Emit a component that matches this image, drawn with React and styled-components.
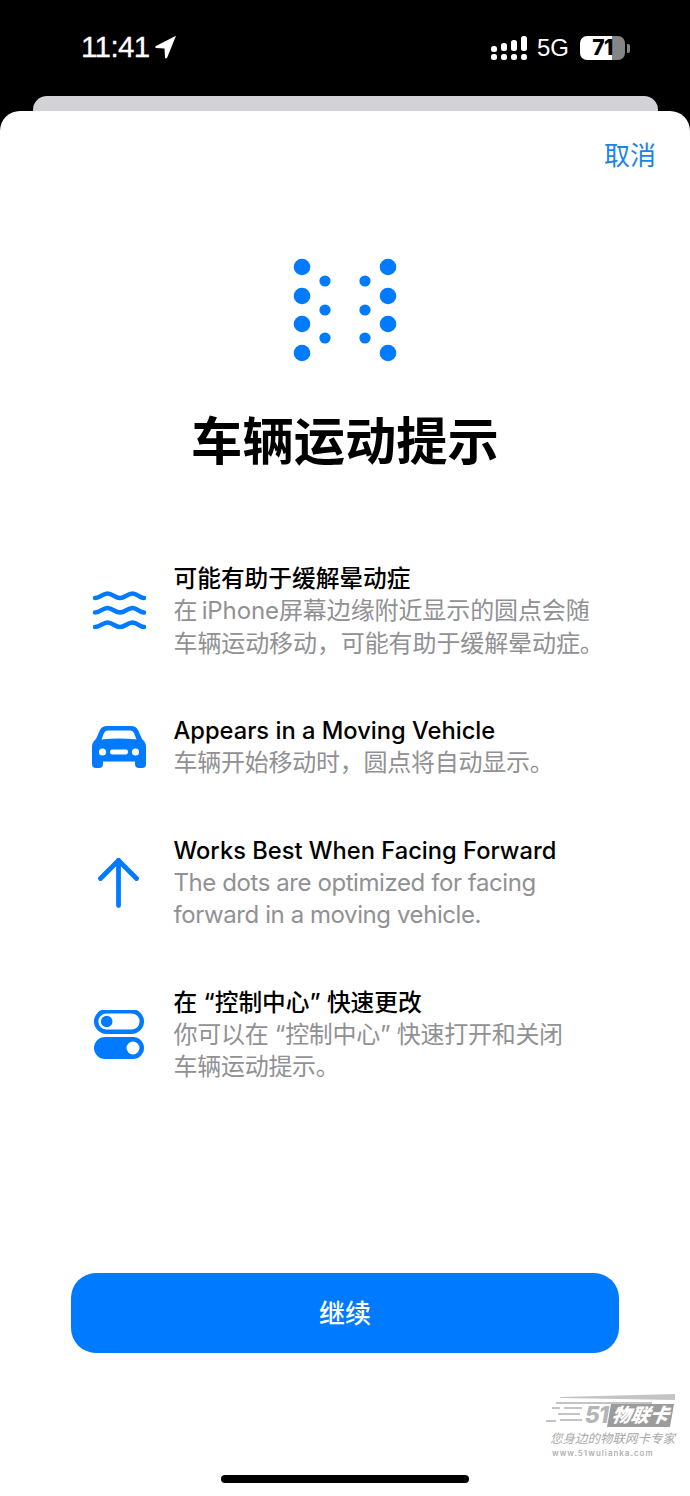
import styled, { createGlobalStyle } from "styled-components";

const GlobalStyle = createGlobalStyle`
  html, body {
    margin: 0;
    padding: 0;
    background: #000;
  }
  body {
    font-family: Inter, "Noto Sans CJK SC", sans-serif;
  }
`;

const Page = styled.div`
  position: relative;
  width: 690px;
  height: 1496px;
  overflow: hidden;
  background: #000;
  display: flex;
  flex-direction: column;
`;

const StatusBar = styled.div`
  height: 96px;
  flex: none;
  box-sizing: border-box;
  padding: 30px 60px 0 81px;
  display: flex;
  align-items: flex-start;
  justify-content: space-between;
  color: #fff;
`;

const Clock = styled.div`
  display: flex;
  align-items: center;
  gap: 5px;
  height: 34px;
  font-family: "Liberation Sans", sans-serif;
  font-size: 29.5px;
  font-weight: 400;
  letter-spacing: -0.6px;
  -webkit-text-stroke: 0.3px #fff;
`;

const StatusRight = styled.div`
  display: flex;
  align-items: center;
  gap: 11px;
  height: 36px;
`;

const Network = styled.span`
  font-family: "Liberation Sans", sans-serif;
  font-size: 24px;
  font-weight: 400;
  margin-left: -1px;
`;

const Battery = styled.div`
  position: relative;
  width: 45px;
  height: 24px;
  border-radius: 7px;
  overflow: hidden;
  background: linear-gradient(to right, #fff 71%, #858585 71%);
  color: #000;
  font-size: 21px;
  font-weight: 800;
  line-height: 24px;
  text-align: center;
  letter-spacing: -0.5px;
`;

const BatteryCap = styled.div`
  width: 3px;
  height: 9px;
  margin-left: -9px;
  border-radius: 0 2px 2px 0;
  background: #858585;
`;

const BackCard = styled.div`
  height: 15px;
  flex: none;
  margin: 0 32px 0 33px;
  border-radius: 14px 14px 0 0;
  background: #d2d2d7;
`;

const Sheet = styled.div`
  flex: 1;
  background: #fff;
  border-radius: 20px 20px 0 0;
  display: flex;
  flex-direction: column;
  align-items: center;
  padding-top: 27px;
`;

const Cancel = styled.div`
  align-self: flex-end;
  margin-right: 34px;
  font-size: 26px;
  line-height: 36px;
  color: #1c84e8;
`;

const Hero = styled.div`
  display: flex;
  margin: 84px 0 0 2px;
  flex: none;
`;

const Title = styled.h1`
  margin: 44px 0 0;
  font-size: 51.3px;
  line-height: 70px;
  font-weight: 700;
  color: #000;
`;

const Features = styled.div`
  align-self: stretch;
  margin-top: 87px;
  padding-left: 88px;
  display: flex;
  flex-direction: column;
`;

const Feature = styled.div`
  display: grid;
  grid-template-columns: 62px 1fr;
  column-gap: 24px;
  align-items: center;
  margin-bottom: ${(p) => p.$gap}px;
`;

const FeatureIcon = styled.div`
  display: flex;
  justify-content: center;
`;

const FeatureBody = styled.div`
  margin-left: -0.5px;
`;

const FeatureTitle = styled.div`
  font-size: 23.7px;
  line-height: 32px;
  font-weight: 500;
  color: #000;
  white-space: nowrap;
`;

const FeatureText = styled.div`
  font-size: 24px;
  line-height: 32.5px;
  font-weight: 400;
  letter-spacing: ${(p) => p.$tracking}px;
  color: #919194;
  white-space: nowrap;
`;

const Spacer = styled.div`
  flex: 1;
`;

const ContinueButton = styled.button`
  flex: none;
  width: 548px;
  height: 80px;
  padding: 0 0 3px;
  border: 0;
  border-radius: 25px;
  background: #007aff;
  color: #fff;
  font-family: inherit;
  font-size: 26px;
  font-weight: 500;
`;

const HomeBar = styled.div`
  flex: none;
  width: 248px;
  height: 8px;
  margin: 122px 0 13px;
  border-radius: 4px;
  background: #000;
`;

const Watermark = styled.div`
  position: absolute;
  left: 546px;
  top: 1393px;
  width: 132px;
  color: #a9a9a9;
`;

const MarkLines = styled.svg`
  position: absolute;
  left: 0;
  top: 0;
`;

const MarkLogo = styled.div`
  display: flex;
  justify-content: flex-end;
  align-items: center;
  height: 36px;
  padding: 8px 6px 0 0;
  box-sizing: border-box;
  gap: 1px;
  font-style: italic;
  font-weight: 800;
`;

const MarkNumber = styled.span`
  font-size: 23px;
  letter-spacing: -1px;
  color: #b5b5b5;
`;

const MarkBadge = styled.span`
  padding: 0 3px;
  background: #9c9c9c;
  color: #fff;
  font-size: 19px;
  line-height: 23px;
  transform: skewX(-10deg);
`;

const MarkSlogan = styled.div`
  margin-top: 1px;
  padding-left: 4px;
  font-size: 12.5px;
  line-height: 17px;
  font-style: italic;
  white-space: nowrap;
`;

const MarkUrl = styled.div`
  font-size: 8px;
  line-height: 12px;
  letter-spacing: 1.05px;
  padding-left: 6px;
  font-weight: 500;
`;

const BLUE = "#007aff";

const LocationArrow = () => (
  <svg width="22" height="24" viewBox="0 0 22 24">
    <path
      d="M21 0.8 L12 23 Q10.5 24 10 22.5 L9.5 13.5 L0.8 13 Q-0.2 12 1 11 Z"
      fill="#fff"
    />
  </svg>
);

const Signal = () => (
  <svg width="36" height="26" viewBox="0 0 36 26" fill="#fff">
    <rect x="0" y="11" width="6" height="6" rx="2.5" />
    <rect x="0" y="19" width="6" height="6" rx="2.5" />
    <rect x="10" y="8" width="6" height="8" rx="2.5" />
    <rect x="10" y="19" width="6" height="6" rx="2.5" />
    <rect x="20" y="5" width="6" height="11" rx="2.5" />
    <rect x="20" y="19" width="6" height="6" rx="2.5" />
    <rect x="30" y="1" width="6" height="15" rx="2.5" />
    <rect x="30" y="19" width="6" height="6" rx="2.5" />
  </svg>
);

const bigDots = [8, 37, 65, 94];
const smallDots = [22, 51, 79];

const HeroDots = () => (
  <svg width="106" height="104" viewBox="0 0 106 104" fill={BLUE}>
    {bigDots.map((y) => (
      <g key={y}>
        <circle cx="9" cy={y + 1} r="8.3" />
        <circle cx="95" cy={y + 1} r="8.3" />
      </g>
    ))}
    {smallDots.map((y) => (
      <g key={y}>
        <circle cx="32" cy={y + 1} r="5.6" />
        <circle cx="72" cy={y + 1} r="5.6" />
      </g>
    ))}
  </svg>
);

const wave = "c5.5 0 7.5 -4.5 12.5 -4.5 s7.5 4.5 12.5 4.5 s7.5 -4.5 12.5 -4.5 s7 4.5 11.5 4.5";

const WavesIcon = () => (
  <svg width="54" height="44" viewBox="0 0 54 44" fill="none" stroke={BLUE} strokeWidth="4.4" strokeLinecap="round">
    <path d={`M3 8 ${wave}`} />
    <path d={`M3 22.5 ${wave}`} />
    <path d={`M3 37 ${wave}`} />
  </svg>
);

const CarIcon = () => (
  <svg width="54" height="42" viewBox="0 0 54 42">
    <path
      fillRule="evenodd"
      fill={BLUE}
      d="M15 0 H39 Q44 0 46 4 L50 13 Q54 16 54 21 V38 Q54 42 50 42 H47 Q43 42 43 38 V35.5 H11 V38 Q11 42 7 42 H4 Q0 42 0 38 V21 Q0 16 4 13 L8 4 Q10 0 15 0 Z M15.5 4.5 Q13 4.5 12 7 L9.5 13.5 Q20 12.5 27 12.5 T44.5 13.5 L42 7 Q41 4.5 38.5 4.5 Z M10.5 22.4 A3.6 3.6 0 1 0 10.5 29.6 A3.6 3.6 0 1 0 10.5 22.4 Z M43.5 22.4 A3.6 3.6 0 1 0 43.5 29.6 A3.6 3.6 0 1 0 43.5 22.4 Z M20 23.6 Q18 23.6 18 26 T20 28.4 H34 Q36 28.4 36 26 T34 23.6 Z"
    />
  </svg>
);

const ArrowIcon = () => (
  <svg width="44" height="50" viewBox="0 0 44 50" fill="none" stroke={BLUE} strokeWidth="4.8" strokeLinecap="round" strokeLinejoin="round">
    <path d="M21.5 2.5 V47.5" />
    <path d="M3.5 20.5 L21.5 2.5 L39.5 20.5" />
  </svg>
);

const ToggleIcon = () => (
  <svg width="50" height="50" viewBox="0 0 50 50">
    <rect x="2.2" y="1.2" width="45.6" height="20.6" rx="10.3" fill="none" stroke={BLUE} strokeWidth="4.4" />
    <circle cx="12.7" cy="11.5" r="5.8" fill={BLUE} />
    <rect x="0" y="27" width="50" height="22" rx="11" fill={BLUE} />
    <circle cx="39" cy="38" r="6.5" fill="#fff" />
  </svg>
);

const features = [
  {
    icon: <WavesIcon />,
    title: "可能有助于缓解晕动症",
    lines: ["在\u2009iPhone屏幕边缘附近显示的圆点会随", "车辆运动移动，可能有助于缓解晕动症。"],
    tracking: -0.1,
    gap: 55,
  },
  {
    icon: <CarIcon />,
    title: "Appears in a Moving Vehicle",
    lines: ["车辆开始移动时，圆点将自动显示。"],
    tracking: -0.25,
    gap: 55,
  },
  {
    icon: <ArrowIcon />,
    title: "Works Best When Facing Forward",
    lines: ["The dots are optimized for facing", "forward in a moving vehicle."],
    tracking: -0.42,
    gap: 55,
  },
  {
    icon: <ToggleIcon />,
    title: "在 “控制中心” 快速更改",
    lines: ["你可以在 “控制中心” 快速打开和关闭", "车辆运动提示。"],
    tracking: -0.28,
    gap: 0,
  },
];

export default function App() {
  return (
    <Page>
      <GlobalStyle />
      <StatusBar>
        <Clock>
          11:41
          <LocationArrow />
        </Clock>
        <StatusRight>
          <Signal />
          <Network>5G</Network>
          <Battery>71</Battery>
          <BatteryCap />
        </StatusRight>
      </StatusBar>
      <BackCard />
      <Sheet>
        <Cancel>取消</Cancel>
        <Hero>
          <HeroDots />
        </Hero>
        <Title>车辆运动提示</Title>
        <Features>
          {features.map((f) => (
            <Feature key={f.title} $gap={f.gap}>
              <FeatureIcon>{f.icon}</FeatureIcon>
              <FeatureBody>
                <FeatureTitle>{f.title}</FeatureTitle>
                {f.lines.map((line) => (
                  <FeatureText key={line} $tracking={f.tracking}>
                    {line}
                  </FeatureText>
                ))}
              </FeatureBody>
            </Feature>
          ))}
        </Features>
        <Spacer />
        <ContinueButton>继续</ContinueButton>
        <HomeBar />
      </Sheet>
      <Watermark>
        <MarkLines width="132" height="36" viewBox="0 0 132 36" fill="#c4c4c4">
          <path d="M14 4 L129 1 V7 L14 5 Z" />
          <rect x="10" y="9" width="96" height="2" />
          <rect x="6" y="14" width="8" height="2" />
          <rect x="18" y="14" width="18" height="2" />
          <rect x="0" y="27" width="10" height="2" />
          <rect x="12" y="20" width="22" height="2" />
          <rect x="14" y="26" width="22" height="2" />
        </MarkLines>
        <MarkLogo>
          <MarkNumber>51</MarkNumber>
          <MarkBadge>物联卡</MarkBadge>
        </MarkLogo>
        <MarkSlogan>您身边的物联网卡专家</MarkSlogan>
        <MarkUrl>www.51wulianka.com</MarkUrl>
      </Watermark>
    </Page>
  );
}
